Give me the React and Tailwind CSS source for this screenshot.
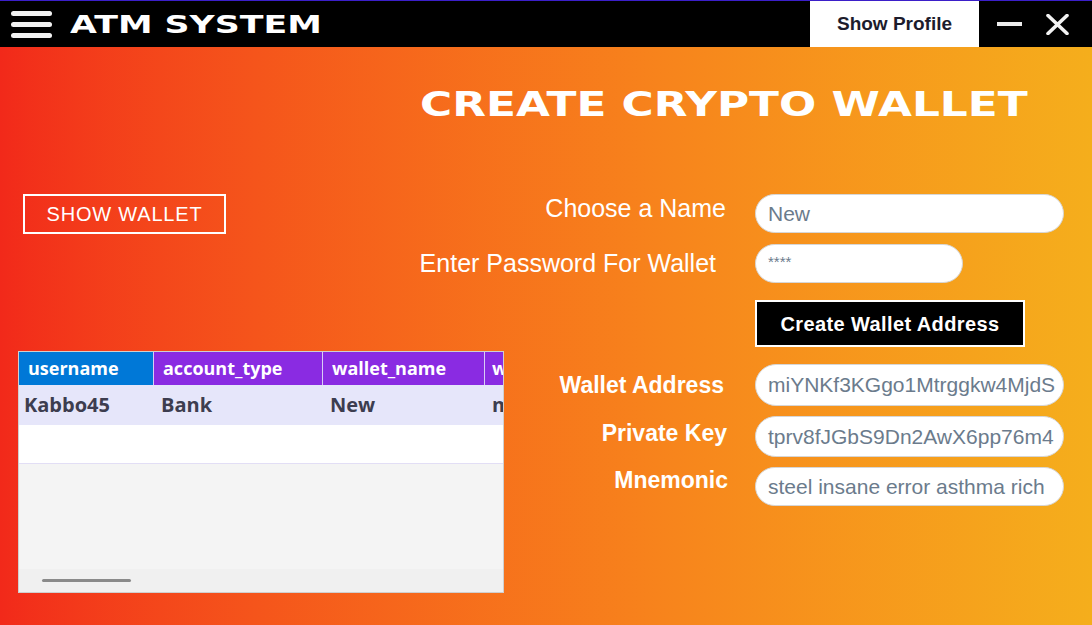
export default function App() {
  const sans = { fontFamily: '"Liberation Sans", Arial, sans-serif' };
  const wide = { fontFamily: '"DejaVu Sans", sans-serif' };
  const table = { fontFamily: '"Open Sans", "Noto Sans", sans-serif' };

  return (
    <div className="w-[1092px] h-[625px] overflow-hidden flex flex-col bg-gradient-to-r from-[#f2291a] to-[#f5ae1c]" style={sans}>
      {/* top bar */}
      <div className="h-[47px] border-t border-[#3b1fc9] bg-black flex items-stretch shrink-0">
        <div className="flex flex-col justify-center gap-[6px] pl-[11px] w-[70px]">
          <div className="w-[41px] h-[5px] rounded-full bg-[#f2f2f2]" />
          <div className="w-[41px] h-[5px] rounded-full bg-[#f2f2f2]" />
          <div className="w-[41px] h-[5px] rounded-full bg-[#f2f2f2]" />
        </div>
        <div className="flex items-center">
          <span className="inline-block origin-left scale-x-[1.39] text-[25px] leading-none font-bold text-white" style={wide}>
            ATM SYSTEM
          </span>
        </div>
        <div className="flex-1" />
        <div className="w-[169px] bg-white flex items-center justify-center text-[19px] font-bold text-[#1c1c2c]">
          Show Profile
        </div>
        <div className="w-[113px] flex items-center">
          <div className="ml-[18px] w-[25px] h-[4px] bg-[#ececec]" />
          <svg className="ml-[24px]" width="23" height="21" viewBox="0 0 23 21">
            <path d="M2 1.5 L21 19.5 M21 1.5 L2 19.5" stroke="#f2f2f2" strokeWidth="3.6" strokeLinecap="round" />
          </svg>
        </div>
      </div>

      {/* title */}
      <div className="mt-[40px] pl-[420px] h-[34px]">
        <span className="inline-block origin-left scale-x-[1.29] text-[34px] leading-none font-bold text-white whitespace-nowrap" style={wide}>
          CREATE CRYPTO WALLET
        </span>
      </div>

      {/* name / password */}
      <div className="mt-[73px] flex items-start">
        <div className="w-[410px] pl-[23px]">
          <div className="w-[203px] h-[40px] border-2 border-white flex items-center justify-center text-white text-[20px] tracking-[0.8px]">
            SHOW WALLET
          </div>
        </div>
        <div className="flex flex-col">
          <div className="h-[39px] flex items-center">
            <div className="w-[345px] pr-[29px] text-right text-white text-[25px] -mt-[10px]">Choose a Name</div>
            <div className="w-[309px] h-[39px] rounded-full bg-white border border-[#d6d6d6] px-[12px] flex items-center text-[21px] text-[#6b7b8c]">
              New
            </div>
          </div>
          <div className="mt-[11px] h-[39px] flex items-center">
            <div className="w-[345px] pr-[39px] text-right text-white text-[25px]">Enter Password For Wallet</div>
            <div className="w-[208px] h-[39px] rounded-full bg-white border border-[#d6d6d6] px-[12px] flex items-start pt-[6px] text-[15px] text-[#6b7b8c]">
              ****
            </div>
          </div>
        </div>
      </div>

      {/* create button */}
      <div className="mt-[17px] pl-[755px]">
        <div className="w-[270px] h-[47px] bg-black border-2 border-white flex items-center justify-center text-white text-[20px] font-bold tracking-[0.4px]">
          Create Wallet Address
        </div>
      </div>

      {/* table + results */}
      <div className="mt-[4px] flex items-start">
        <div className="w-[530px] pl-[18px]">
          <div className="w-[486px] h-[242px] border border-[#cfcfcf] bg-[#f4f4f4] flex flex-col overflow-hidden" style={table}>
            <div className="h-[33px] flex text-white text-[18px] font-bold shrink-0">
              <div className="w-[135px] bg-[#0078d7] border-r border-[#d9ccf5] pl-[9px] flex items-center">username</div>
              <div className="w-[169px] bg-[#8a2be2] border-r border-[#d9ccf5] pl-[9px] flex items-center">account_type</div>
              <div className="w-[162px] bg-[#8a2be2] border-r border-[#d9ccf5] pl-[9px] flex items-center">wallet_name</div>
              <div className="w-[18px] bg-[#8a2be2] pl-[7px] flex items-center overflow-hidden">w</div>
            </div>
            <div className="h-[40px] flex bg-[#e6e6fa] text-[20px] font-bold text-[#3d3d4f] shrink-0">
              <div className="w-[135px] pl-[5px] flex items-center">Kabbo45</div>
              <div className="w-[169px] pl-[7px] flex items-center">Bank</div>
              <div className="w-[162px] pl-[7px] flex items-center">New</div>
              <div className="w-[18px] pl-[7px] flex items-center overflow-hidden">m</div>
            </div>
            <div className="h-[39px] bg-white border-b border-[#e2def5] shrink-0" />
            <div className="flex-1" />
            <div className="h-[23px] bg-[#f0f0f0] shrink-0 pt-[10px] pl-[23px]">
              <div className="w-[89px] h-[3px] rounded-full bg-[#8a8a8a]" />
            </div>
          </div>
        </div>
        <div className="flex flex-col pt-[13px]">
          <div className="h-[42px] flex items-center">
            <div className="w-[225px] pr-[31px] text-right text-white text-[23px] font-bold">Wallet Address</div>
            <div className="w-[309px] h-[42px] rounded-full bg-white border border-[#d6d6d6] pl-[12px] pr-[10px] flex items-center overflow-hidden whitespace-nowrap text-[21px] text-[#6b7b8c]">
              miYNKf3KGgo1Mtrggkw4MjdS
            </div>
          </div>
          <div className="mt-[10px] h-[41px] flex items-center">
            <div className="w-[225px] pr-[28px] text-right text-white text-[23px] font-bold -mt-[6px]">Private Key</div>
            <div className="w-[309px] h-[41px] rounded-full bg-white border border-[#d6d6d6] pl-[12px] pr-[10px] flex items-center overflow-hidden whitespace-nowrap text-[21px] text-[#6b7b8c]">
              tprv8fJGbS9Dn2AwX6pp76m4
            </div>
          </div>
          <div className="mt-[10px] h-[39px] flex items-center">
            <div className="w-[225px] pr-[27px] text-right text-white text-[23px] font-bold -mt-[13px]">Mnemonic</div>
            <div className="w-[309px] h-[39px] rounded-full bg-white border border-[#d6d6d6] pl-[12px] pr-[10px] flex items-center overflow-hidden whitespace-nowrap text-[21px] text-[#6b7b8c]">
              steel insane error asthma rich
            </div>
          </div>
        </div>
      </div>
    </div>
  );
}
